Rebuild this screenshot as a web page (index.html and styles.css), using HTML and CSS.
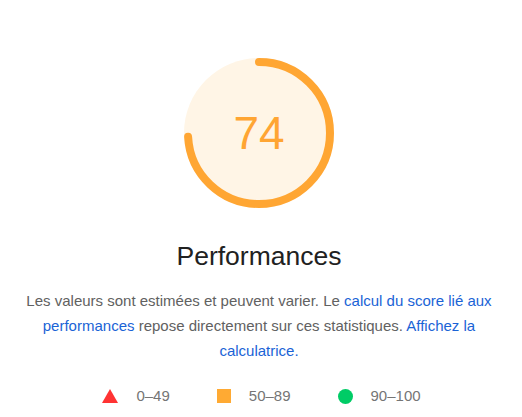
FILE: index.html
```html
<!DOCTYPE html>
<html>
<head>
<title>Performances</title>
<meta charset='utf-8'/>
<link rel="stylesheet" href="styles.css">
</head>
<body>
<div class='report'>
	<div class='gauge'>
		<svg width="150" height="150" viewBox="0 0 150 150">
			<circle class='gauge-base' cx="75" cy="75" r="75"/>
			<circle class='gauge-arc' cx="75" cy="75" r="71" stroke-dasharray="330.1 446.1" transform="rotate(-90 75 75)"/>
		</svg>
		<span class='gauge-score'>74</span>
	</div>
	<h2 class='title'>Performances</h2>
	<p class='desc'>Les valeurs sont estimées et peuvent varier. Le <a href='#'>calcul du score lié aux performances</a> repose directement sur ces statistiques. <a href='#'>Affichez la calculatrice.</a></p>
	<div class='legend'>
		<div class='item'><span class='icon fail'></span>0–49</div>
		<div class='item'><span class='icon average'></span>50–89</div>
		<div class='item'><span class='icon pass'></span>90–100</div>
	</div>
</div>
</body>
</html>
```

FILE: styles.css
```css
body {
	margin: 0;
	background: #fff;
	font-family: "Liberation Sans", Arial, sans-serif;
}
.report {
	width: 518px;
	padding-top: 58px;
	display: flex;
	flex-direction: column;
	align-items: center;
}
.gauge {
	position: relative;
	width: 150px;
	height: 150px;
}
.gauge svg {
	display: block;
}
.gauge-base {
	fill: #fff5e6;
}
.gauge-arc {
	fill: none;
	stroke: #ffa633;
	stroke-width: 8;
	stroke-linecap: round;
}
.gauge-score {
	position: absolute;
	left: 0;
	right: 0;
	top: 0;
	line-height: 150px;
	text-align: center;
	font-size: 46px;
	color: #ffa533;
}
.title {
	margin: 32px 0 0;
	font-size: 26.5px;
	line-height: 32px;
	font-weight: normal;
	color: #212121;
}
.desc {
	width: 476px;
	margin: 16px 0 0;
	font-size: 15px;
	line-height: 25px;
	text-align: center;
	color: #616161;
}
.desc a {
	color: #1a63d6;
	text-decoration: none;
}
.legend {
	display: flex;
	gap: 47px;
	margin-top: 23px;
	margin-left: 5px;
	font-size: 15px;
	line-height: 20px;
	color: #757575;
}
.legend .item {
	display: flex;
	align-items: center;
	gap: 18px;
}
.icon {
	display: block;
	width: 15px;
	height: 15px;
}
.icon.fail {
	width: 0;
	height: 0;
	border-left: 8px solid transparent;
	border-right: 8px solid transparent;
	border-bottom: 14px solid #f33;
}
.icon.average {
	width: 14px;
	height: 14px;
	background: #fa3;
}
.icon.pass {
	border-radius: 50%;
	background: #0c6;
}
```
